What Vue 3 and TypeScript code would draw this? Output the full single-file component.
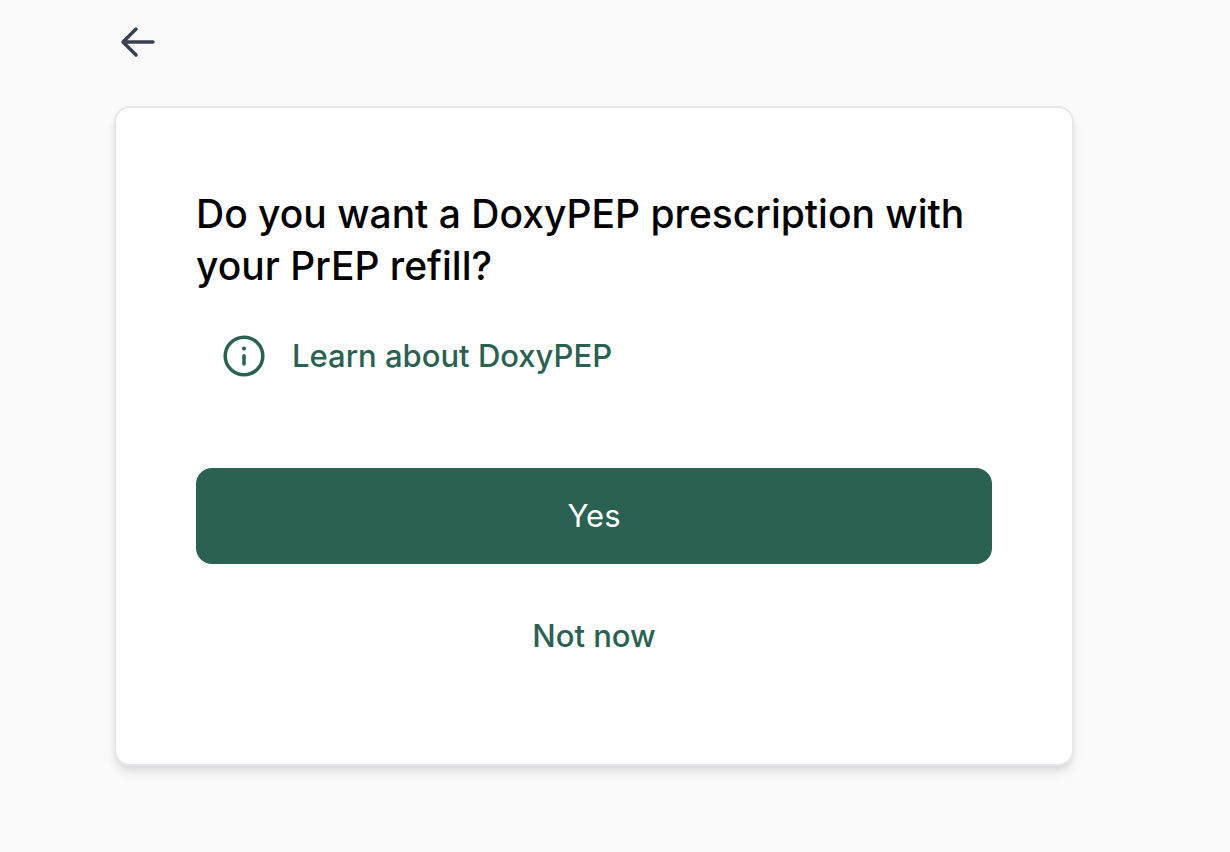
<script setup lang="ts">
const title: string = 'Do you want a DoxyPEP prescription with your PrEP refill?'
</script>

<template>
  <main class="page">
    <nav class="top">
      <button class="back" type="button" aria-label="Back">
        <svg width="36" height="32" viewBox="0 0 36 32" fill="none" stroke="#374151" stroke-width="3.500" stroke-linecap="round" stroke-linejoin="round" aria-hidden="true">
          <path d="M33 16H3M16 3L3 16l13 13" />
        </svg>
      </button>
    </nav>
    <section class="card">
      <h1 class="title">{{ title }}</h1>
      <a class="learn" href="#learn">
        <svg width="48" height="48" viewBox="0 0 48 48" fill="none" stroke="currentColor" stroke-width="3.500" stroke-linecap="round" aria-hidden="true">
          <circle cx="24" cy="24" r="18.800" />
          <path d="M24 23.800v8.200" />
          <circle cx="24" cy="16.500" r="2" fill="currentColor" stroke="none" />
        </svg>
        <span>Learn about DoxyPEP</span>
      </a>
      <button class="btn primary" type="button">Yes</button>
      <button class="btn plain" type="button">Not now</button>
    </section>
  </main>
</template>

<style>
body {
  background: #fafafa;
}
</style>

<style scoped>
.page {
  box-sizing: border-box;
  padding: 24px 156px 84px 114px;
  font-family: Inter, "Open Sans", sans-serif;
}
.top {
  display: flex;
  height: 36px;
  align-items: center;
  padding-left: 6px;
}
.back {
  display: flex;
  padding: 0;
  border: 0;
  background: none;
  cursor: pointer;
}
.card {
  box-sizing: border-box;
  margin-top: 46px;
  padding: 80px;
  border: 2px solid #e5e7eb;
  border-radius: 16px;
  background: #fff;
  box-shadow: 0 8px 12px -2px rgba(0, 0, 0, 0.1), 0 4px 8px -2px rgba(0, 0, 0, 0.06);
}
.title {
  margin: 0;
  font-size: 39px;
  font-weight: 450;
  line-height: 52px;
  color: #000;
}
.learn {
  display: flex;
  align-items: center;
  gap: 24px;
  margin: 40px 0 0 24px;
  font-size: 31px;
  font-weight: 450;
  line-height: 48px;
  color: #2a6152;
  text-decoration: none;
}
.learn svg {
  flex: none;
}
.btn {
  display: block;
  width: 100%;
  height: 96px;
  padding: 0;
  border: 0;
  border-radius: 16px;
  font-family: inherit;
  font-size: 31px;
  line-height: 48px;
  cursor: pointer;
}
.primary {
  margin-top: 88px;
  background: #2a6152;
  color: #fff;
}
.plain {
  margin-top: 24px;
  background: none;
  color: #2a6152;
  font-weight: 450;
}
</style>
